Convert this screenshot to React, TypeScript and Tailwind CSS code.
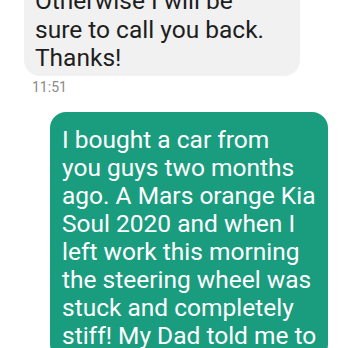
const grayLines = ["Otherwise I will be", "sure to call you back.", "Thanks!"]

const greenLines = [
  "I bought a car from",
  "you guys two months",
  "ago. A Mars orange Kia",
  "Soul 2020 and when I",
  "left work this morning",
  "the steering wheel was",
  "stuck and completely",
  "stiff! My Dad told me to",
]

export default function App() {
  return (
    <div className="h-[348px] w-[348px] overflow-hidden bg-white font-['Roboto',sans-serif]">
      <div className="mt-[-13px] flex flex-col">
        <div className="ml-[24px] w-[276px] rounded-b-[16px] bg-[#f1f1f1] px-[11px] pb-[3px] pt-0 text-[24.5px] leading-[28.5px] text-[#1e1e1e]">
          {grayLines.map((l) => (
            <div key={l} className="whitespace-nowrap">{l}</div>
          ))}
        </div>
        <div className="ml-[32px] mt-[3px] text-[14px] leading-[16px] text-[#8a8a8a]">11:51</div>
        <div className="ml-[50px] mt-[17px] w-[278px] rounded-[16px] bg-[#1a9c7e] px-[12px] pb-[10px] pt-[14px] text-[24.5px] leading-[28px] text-white">
          {greenLines.map((l) => (
            <div key={l} className="whitespace-nowrap">{l}</div>
          ))}
        </div>
      </div>
    </div>
  )
}
